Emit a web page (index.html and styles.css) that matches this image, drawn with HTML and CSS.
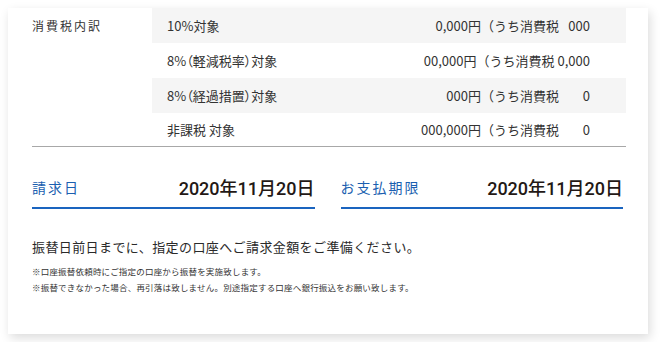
FILE: index.html
```
<!DOCTYPE html>
<html lang="ja">
<head>
    <meta charset="UTF-8">
    <meta name="viewport" content="width=device-width, initial-scale=1.0">
    <title>ご請求内容</title>
    <link rel="stylesheet" href="styles.css">
</head>
<body>
    <div class="card">
        <div class="tax-table">
            <div class="tax-label">消費税内訳</div>
            <ul class="tax-rows">
                <li class="tax-row">
                    <span class="tax-name">10%対象</span>
                    <span class="tax-amount">0,000円（うち消費税</span>
                    <span class="tax-value">000</span>
                </li>
                <li class="tax-row">
                    <span class="tax-name">8%（軽減税率）対象</span>
                    <span class="tax-amount">00,000円（うち消費税</span>
                    <span class="tax-value">0,000</span>
                </li>
                <li class="tax-row">
                    <span class="tax-name">8%（経過措置）対象</span>
                    <span class="tax-amount">000円（うち消費税</span>
                    <span class="tax-value">0</span>
                </li>
                <li class="tax-row">
                    <span class="tax-name">非課税 対象</span>
                    <span class="tax-amount">000,000円（うち消費税</span>
                    <span class="tax-value">0</span>
                </li>
            </ul>
        </div>

        <div class="due-dates">
            <div class="due">
                <span class="due-label">請求日</span>
                <span class="due-date">2020年11月20日</span>
            </div>
            <div class="due">
                <span class="due-label">お支払期限</span>
                <span class="due-date">2020年11月20日</span>
            </div>
        </div>

        <p class="notice">振替日前日までに、指定の口座へご請求金額をご準備ください。</p>
        <p class="notes">
            ※口座振替依頼時にご指定の口座から振替を実施致します。<br>
            ※振替できなかった場合、再引落は致しません。別途指定する口座へ銀行振込をお願い致します。
        </p>
    </div>
</body>
</html>
```

FILE: styles.css
```
body {
    margin: 0;
    background: #fff;
    color: #333;
    font-family: "Noto Sans CJK JP", "Noto Sans", sans-serif;
}

.card {
    box-sizing: border-box;
    width: 640px;
    height: 326px;
    margin: 8px;
    padding: 0 22px 0 24px;
    background: #fff;
    box-shadow: 2px 4px 10px rgba(0, 0, 0, 0.14);
}

/* 消費税内訳 */
.tax-table {
    display: flex;
    border-bottom: 1px solid #a8a8a8;
}

.tax-label {
    width: 120px;
    font-size: 12px;
    line-height: 35px;
    letter-spacing: 2px;
}

.tax-rows {
    flex: 1;
    list-style: none;
    margin: 0;
    padding: 0;
}

.tax-row {
    display: flex;
    align-items: center;
    height: 35px;
    padding: 0 36px 0 15px;
    font-size: 13px;
}

.tax-row:nth-child(odd) {
    background: #f5f5f5;
}

.tax-row:last-child {
    height: 33px;
}

.tax-name {
    flex: 1;
    font-feature-settings: "palt";
}

.tax-value {
    min-width: 28px;
    padding-left: 3px;
    text-align: right;
}

/* 請求日 / お支払期限 */
.due-dates {
    display: flex;
    gap: 26px;
    margin-top: 28px;
    padding-right: 3px;
}

.due {
    flex: 1;
    display: flex;
    justify-content: space-between;
    align-items: center;
    height: 24px;
    padding-bottom: 8px;
    border-bottom: 2px solid #1a64bf;
}

.due-label {
    color: #1b5fb0;
    font-size: 14px;
    letter-spacing: 2px;
}

.due-date {
    color: #231815;
    font-family: Roboto, "Noto Sans CJK JP", sans-serif;
    font-size: 18px;
    font-weight: 500;
}

.notice {
    margin: 28px 0 0;
    font-size: 13px;
    line-height: 20px;
    letter-spacing: 0.4px;
    color: #2a2a2a;
}

.notes {
    margin: 6px 0 0;
    font-size: 8.5px;
    line-height: 16px;
    letter-spacing: 0.2px;
}
```
